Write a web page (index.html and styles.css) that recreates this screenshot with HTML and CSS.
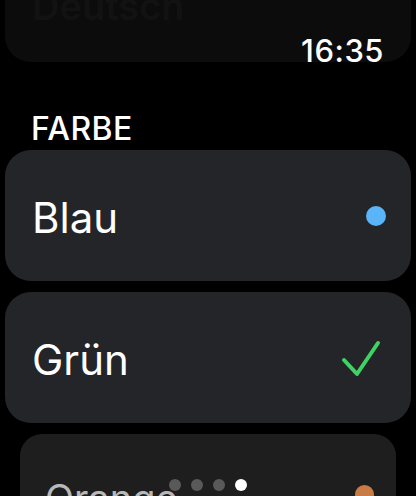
FILE: index.html
```html
<!DOCTYPE html>
<html lang="de">
<head>
<meta charset="utf-8">
<link rel="stylesheet" href="styles.css">
</head>
<body>
<div class="screen">
  <div class="prev-card"><span class="prev-label">Deutsch</span></div>
  <div class="time">16:35</div>
  <h2 class="section">FARBE</h2>
  <div class="list">
    <div class="row">
      <span class="label">Blau</span>
      <span class="dot dot-blue"></span>
    </div>
    <div class="row">
      <span class="label">Grün</span>
      <svg class="check" width="40" height="37" viewBox="0 0 40 37">
        <path d="M3 20 L16 34 L37 3" fill="none" stroke="#3ed363" stroke-width="4" stroke-linecap="round" stroke-linejoin="round"/>
      </svg>
    </div>
    <div class="row row-back">
      <span class="label label-back">Orange</span>
      <span class="dot dot-orange"></span>
    </div>
  </div>
  <div class="pager">
    <span class="pdot"></span><span class="pdot"></span><span class="pdot"></span><span class="pdot active"></span>
  </div>
</div>
</body>
</html>
```
FILE: styles.css
```css
html, body {
  margin: 0;
  padding: 0;
  background: #000;
}
body {
  font-family: Inter, "Noto Sans", "Liberation Sans", sans-serif;
  color: #fff;
}
.screen {
  position: relative;
  width: 416px;
  height: 496px;
  overflow: hidden;
  background: #000;
}
.prev-card {
  margin: -40px 5px 0;
  height: 102px;
  background: #0c0c0c;
  border-radius: 0 0 26px 26px;
  padding-left: 27px;
  box-sizing: border-box;
}
.prev-label {
  display: block;
  font-size: 38px;
  line-height: 40px;
  padding-top: 26px;
  color: #121212;
  font-weight: 600;
}
.time {
  position: absolute;
  top: 33px;
  right: 32px;
  font-size: 31px;
  line-height: 36px;
  font-weight: 500;
  letter-spacing: 0.5px;
}
.section {
  margin: 0;
  padding: 45px 0 0 31px;
  font-size: 32px;
  line-height: 43px;
  font-weight: 500;
  letter-spacing: 0.4px;
}
.list {
  display: flex;
  flex-direction: column;
  gap: 11px;
}
.row {
  margin: 0 5px;
  height: 131px;
  background: #242528;
  border-radius: 26px;
  display: flex;
  align-items: center;
  justify-content: space-between;
  padding: 0 25px 0 27px;
  box-sizing: border-box;
}
.label {
  font-size: 42px;
  line-height: 48px;
  font-weight: 400;
  padding-top: 4px;
}
.dot {
  width: 20px;
  height: 20px;
  border-radius: 50%;
}
.dot-blue {
  background: #5ab4fa;
}
.check {
  margin-right: 5px;
  margin-top: 2px;
}
.row-back {
  margin: 0 20px;
  background: #1e1e1f;
  border-radius: 22px;
  height: 120px;
  padding: 0 24px 0 25px;
  align-items: flex-start;
}
.label-back {
  font-size: 38px;
  color: #b8b8b8;
  padding-top: 40px;
}
.dot-orange {
  background: #c87b45;
  width: 19px;
  height: 19px;
  margin-top: 51px;
  margin-right: -2px;
}
.pager {
  position: absolute;
  left: 169px;
  top: 479px;
  display: flex;
  gap: 10px;
}
.pdot {
  width: 12px;
  height: 12px;
  border-radius: 50%;
  background: #595959;
}
.pdot.active {
  background: #fff;
}
```
